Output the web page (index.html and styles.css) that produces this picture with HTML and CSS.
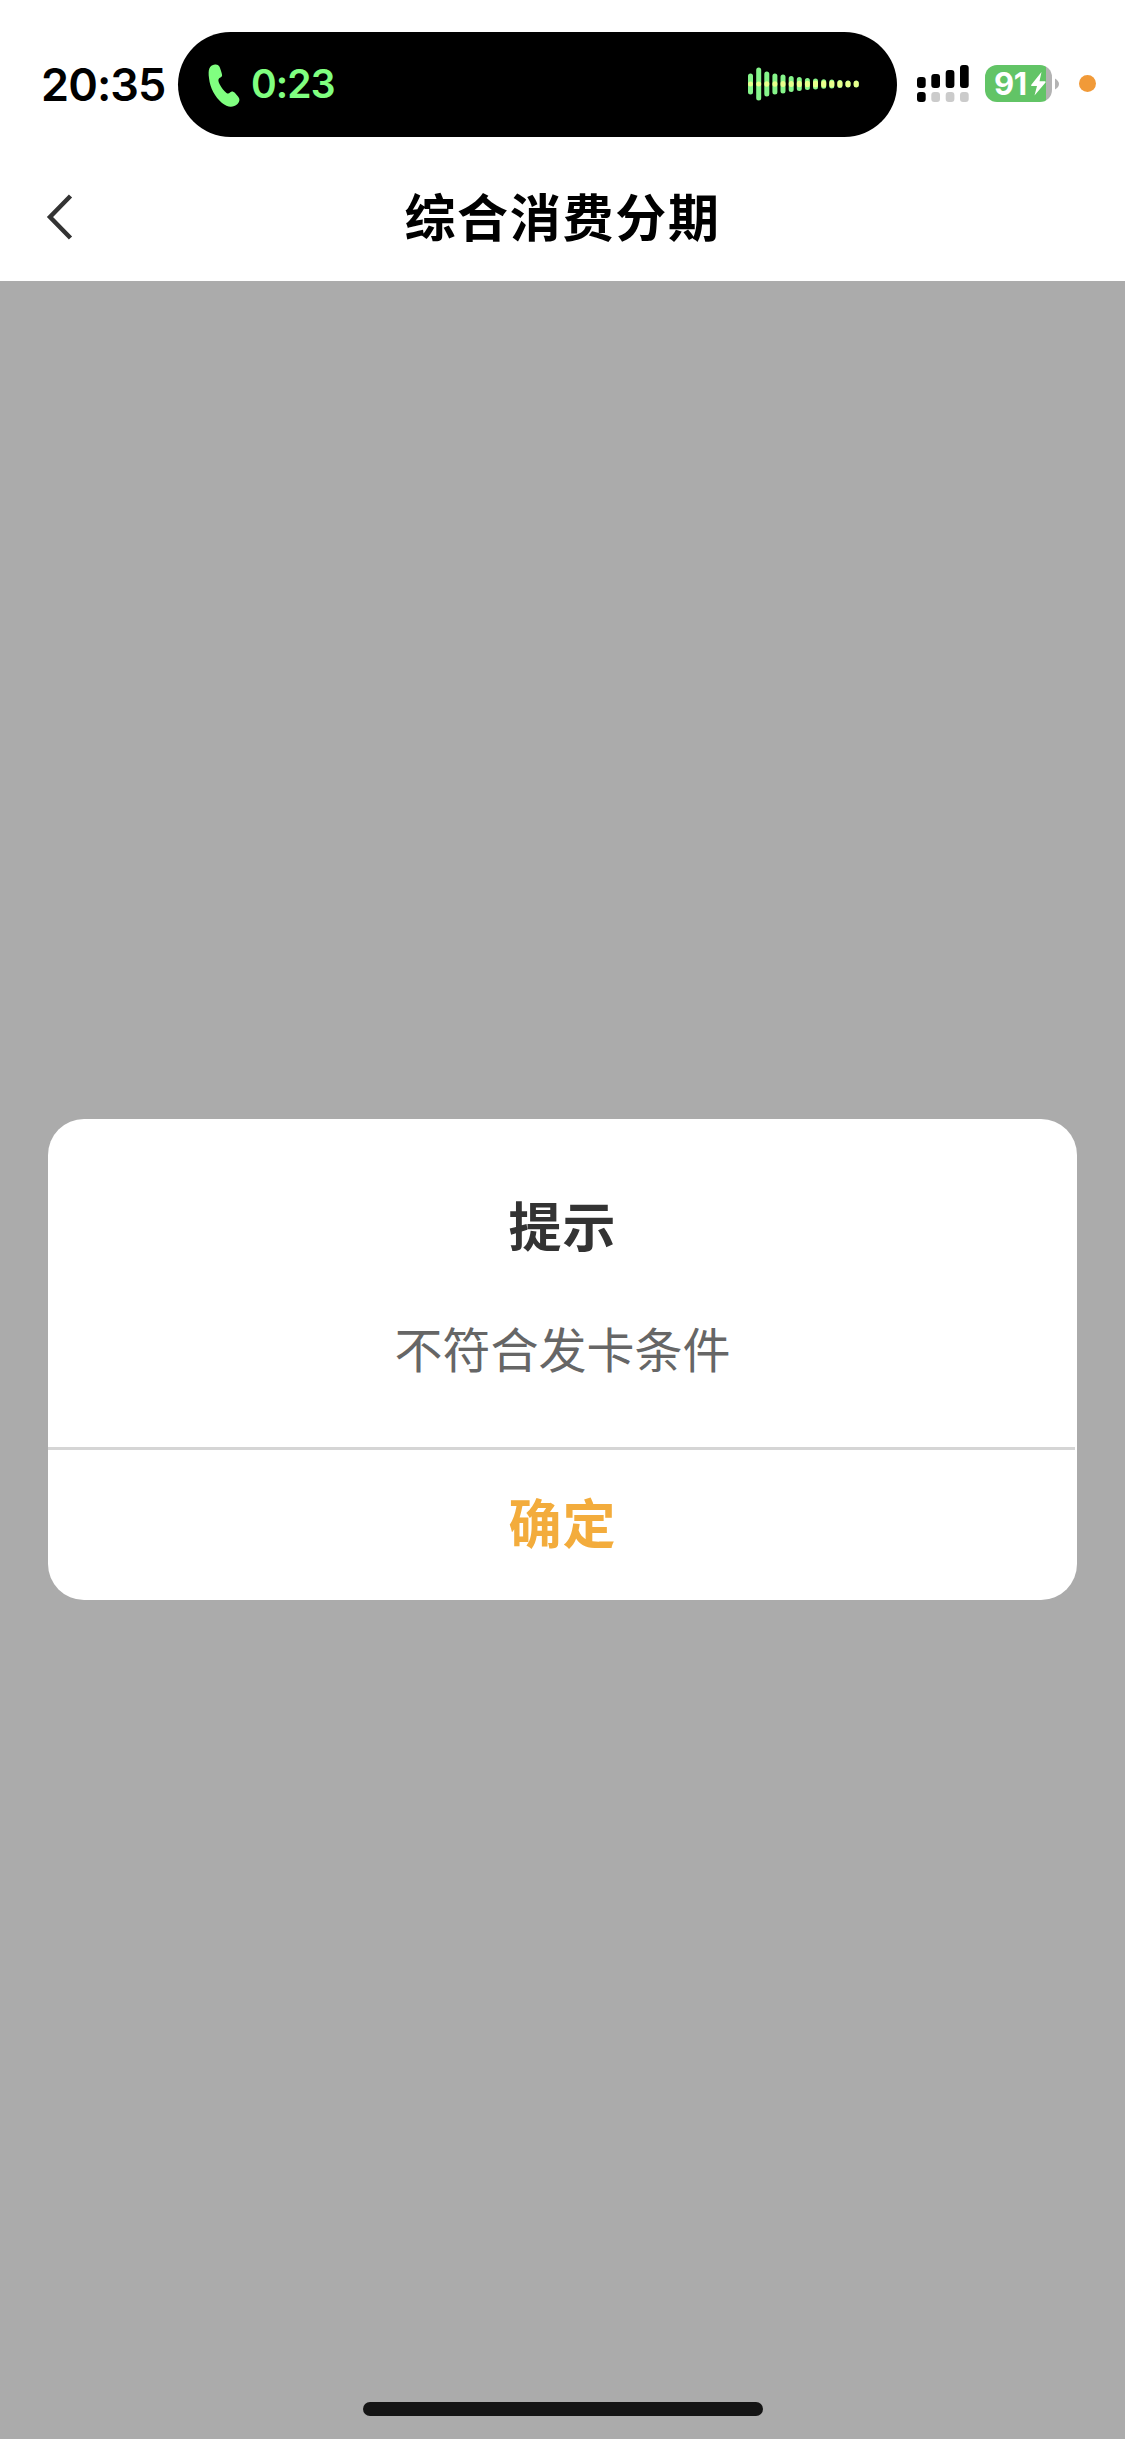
FILE: index.html
```
<!DOCTYPE html>
<html lang="zh-CN">
<head>
  <meta charset="UTF-8" />
  <meta name="viewport" content="width=device-width, initial-scale=1.0" />
  <title>综合消费分期</title>
  <link rel="stylesheet" href="styles.css">
</head>
<body>
  <div class="status-bar">
    <span class="clock">20:35</span>
    <div class="island">
      <svg class="phone-icon" width="32" height="44" viewBox="0 0 32 44">
        <path d="M1 14C0 6 1 1 7 .5C11 0 12 3 13.500 8.500C14.500 12 14.500 12.500 11.500 14C10 15 10 17 11.500 20C13.500 24 16 27 18.500 29C20 30 21 29.500 22 28.500C23.500 27 25 27 27 29L30 32.500C32 35 32 37 29.500 40C25 44 19.500 43.500 14 39C7 33 2 24 1 14Z" fill="#80ff80"/>
      </svg>
      <span class="call-time">0:23</span>
      <svg class="wave" width="112" height="34" viewBox="0 0 112 34" stroke-width="5" stroke-linecap="round">
        <path stroke="#86f58a" d="M2.500 9v16M10.700 3v28M18.800 7v20M26.900 9v16M35 10v14M43.200 11.500v11M51.300 12.500v9M59.400 13.500v7M67.500 14v6M75.700 14.800v4.400M83.800 15v4M91.900 15.500v3M100 16v2M108.200 16v2"/>
        <path stroke="#e8ff8c" d="M2.500 17v.1M10.700 17v.1M18.800 16.800v.4M26.900 16.800v.4M35 16.500v1M43.200 16.500v1M51.300 16.300v1.400M59.400 16.200v1.600M67.500 16v2M75.700 16v2M83.800 16v2M91.900 16v2M100 16.200v1.600M108.200 16.200v1.600"/>
      </svg>
    </div>
    <svg class="signal" width="52" height="38" viewBox="0 0 52 38">
      <rect x="0" y="12" width="8.700" height="11" rx="3"/>
      <rect x="14.300" y="9" width="8.700" height="14" rx="3"/>
      <rect x="28.700" y="5" width="8.700" height="18" rx="3"/>
      <rect x="43" y="0" width="8.700" height="23" rx="3"/>
      <rect x="0" y="27" width="8.700" height="10" rx="3"/>
      <rect x="14.300" y="27" width="8.700" height="10" rx="3" fill="#cbcbcb"/>
      <rect x="28.700" y="27" width="8.700" height="10" rx="3" fill="#cbcbcb"/>
      <rect x="43" y="27" width="8.700" height="10" rx="3" fill="#cbcbcb"/>
    </svg>
    <div class="battery">
      <span class="level">91</span>
      <svg width="15" height="24" viewBox="0 0 15 24">
        <path d="M10.500 0L.3 12.800Q-.2 14 1 14H6L3.500 23.500L14.500 10.500Q15 9.300 13.800 9.300H8.500Z" fill="#fff"/>
      </svg>
    </div>
    <svg class="battery-tip" width="4" height="12" viewBox="0 0 4 12">
      <path d="M0 .5Q4 3 4 6T0 11.500Z" fill="#b3b3b3"/>
    </svg>
    <div class="mic-dot"></div>
  </div>

  <header class="nav">
    <svg class="back" width="28" height="46" viewBox="0 0 28 46">
      <path d="M25.500 2L5 23L25.500 44" fill="none" stroke="#333" stroke-width="4.500"/>
    </svg>
    <h1>综合消费分期</h1>
  </header>

  <main class="overlay">
    <div class="dialog">
      <div class="dialog-body">
        <h2>提示</h2>
        <p>不符合发卡条件</p>
      </div>
      <div class="divider"></div>
      <button class="confirm">确定</button>
    </div>
    <div class="home-indicator"></div>
  </main>
</body>
</html>
```

FILE: styles.css
```
* {
  box-sizing: border-box;
}

body {
  margin: 0;
  height: 2439px;
  display: flex;
  flex-direction: column;
  background-color: #fff;
  font-family: "Noto Sans CJK SC", sans-serif;
  overflow: hidden;
}

h1, h2, p {
  margin: 0;
}

.status-bar {
  display: flex;
  align-items: center;
  height: 169px;
  flex-shrink: 0;
  font-family: Inter, sans-serif;
}

.clock {
  width: 137px;
  margin-left: 41px;
  font-size: 45px;
  font-weight: 600;
  line-height: 54px;
  letter-spacing: -0.9px;
  white-space: nowrap;
}

.island {
  display: flex;
  align-items: center;
  width: 719px;
  height: 105px;
  padding: 0 37px 0 30px;
  border-radius: 53px;
  background-color: #000;
}

.phone-icon {
  margin-top: 3px;
}

.call-time {
  margin-left: 11px;
  margin-bottom: 2px;
  color: #80ff80;
  font-size: 39px;
  font-weight: 600;
  letter-spacing: -0.9px;
}

.wave {
  margin-left: auto;
  margin-bottom: 1px;
}

.signal {
  margin-left: 20px;
  margin-bottom: 1px;
}

.battery {
  display: flex;
  align-items: center;
  width: 67px;
  height: 37px;
  margin-left: 16px;
  margin-bottom: 2px;
  padding-left: 9px;
  border-radius: 12px;
  background: linear-gradient(to right, #62c466 61px, #b3b3b3 61px);
}

.level {
  width: 37px;
  color: #fff;
  font-size: 31px;
  font-weight: 700;
  line-height: 37px;
  letter-spacing: -0.5px;
}

.battery-tip {
  margin-left: 3px;
  margin-bottom: 2px;
}

.mic-dot {
  width: 17px;
  height: 17px;
  margin-left: 20px;
  margin-bottom: 2px;
  border-radius: 50%;
  background-color: #f19a38;
}

/* Title bar */
.nav {
  display: grid;
  grid-template-columns: 120px 1fr 120px;
  align-items: center;
  height: 112px;
  flex-shrink: 0;
  padding-bottom: 16px;
}

.back {
  margin-left: 45px;
}

.nav h1 {
  padding-bottom: 4px;
  color: #000;
  font-size: 51px;
  font-weight: 600;
  line-height: 76px;
  letter-spacing: 1.7px;
  text-align: center;
}

.overlay {
  flex: 1;
  display: flex;
  flex-direction: column;
  align-items: center;
  padding: 838px 48px 23px;
  background-color: #ababab;
}

.dialog {
  width: 1029px;
  height: 481px;
  border-radius: 36px;
  background-color: #fff;
  text-align: center;
}

.dialog-body {
  height: 328px;
  padding-top: 66px;
}

.dialog h2 {
  color: #333;
  font-size: 53px;
  font-weight: 600;
  line-height: 78px;
  letter-spacing: 1px;
}

.dialog p {
  margin-top: 49px;
  color: #666;
  font-size: 48px;
  line-height: 70px;
}

.divider {
  height: 3px;
  margin-right: 2px;
  background-color: #d5d5d5;
}

.confirm {
  display: block;
  width: 100%;
  height: 150px;
  padding: 0 0 9px;
  border: none;
  background: none;
  color: #f3ac3c;
  font-family: inherit;
  font-size: 53px;
  font-weight: 600;
  letter-spacing: 1px;
}

.home-indicator {
  width: 400px;
  height: 14px;
  margin-top: auto;
  border-radius: 7px;
  background-color: #141414;
}
```
